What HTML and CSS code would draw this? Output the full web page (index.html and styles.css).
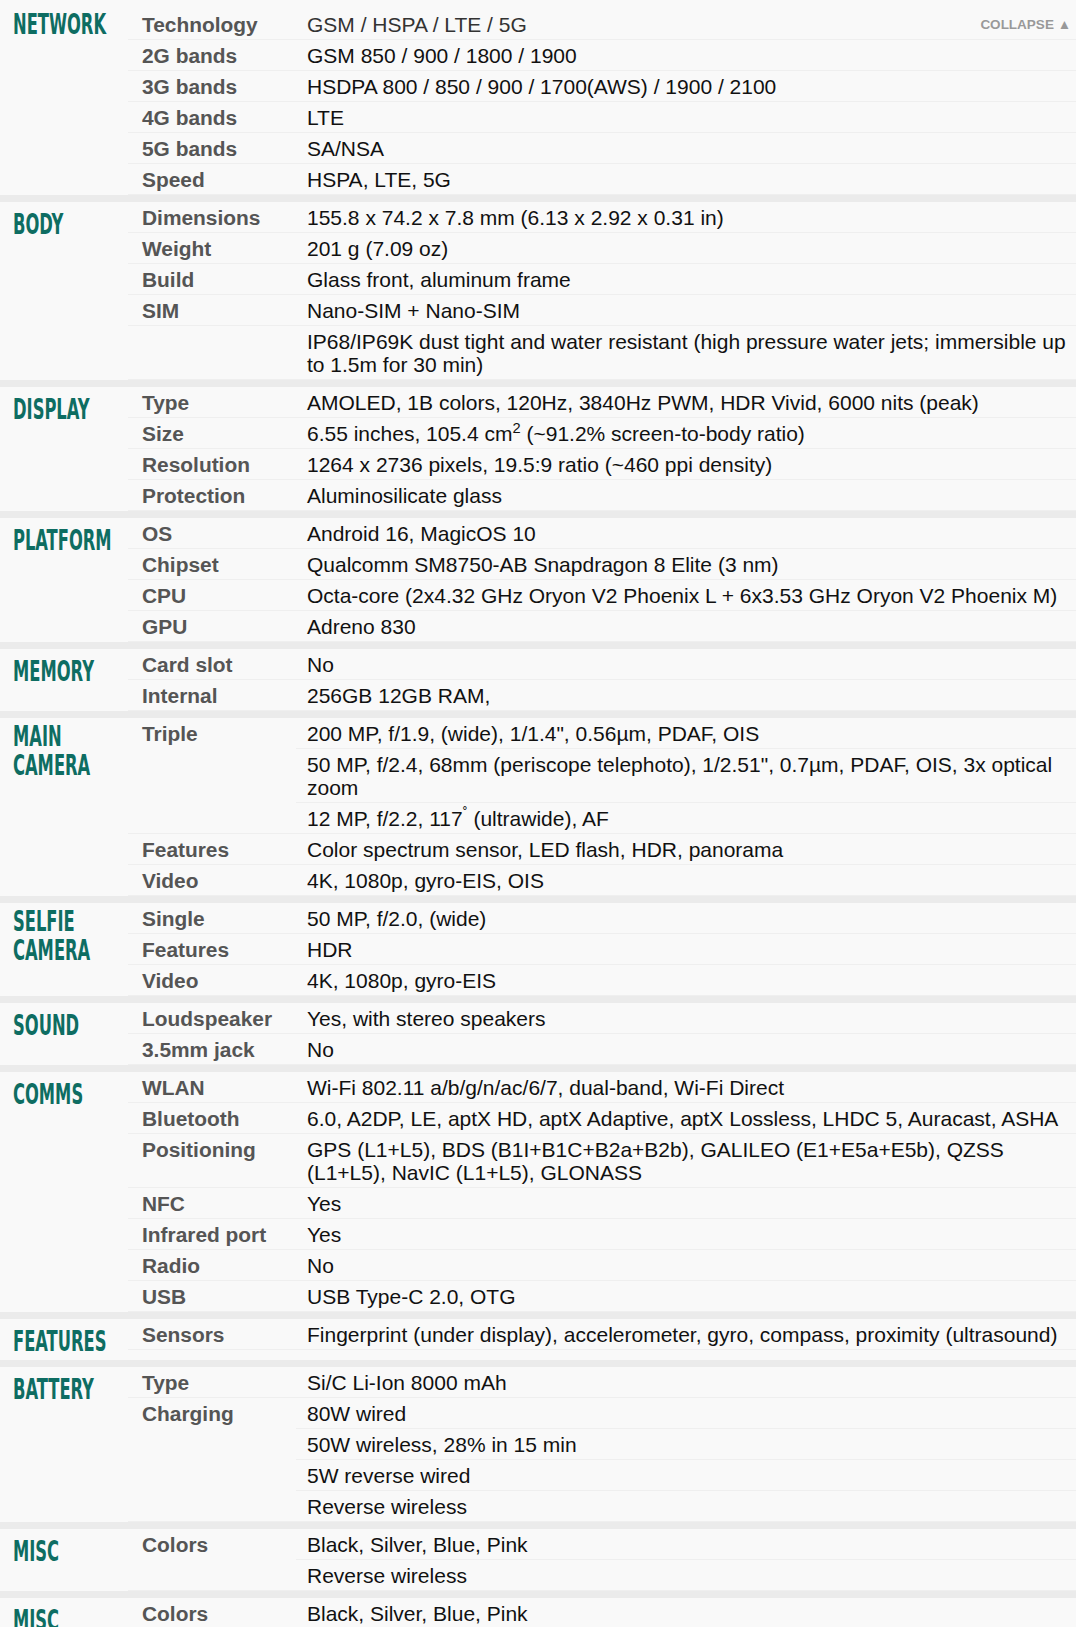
FILE: index.html
```html
<!DOCTYPE html>
<html lang="en">
<head>
<meta charset="utf-8">
<title>Specs</title>
<link rel="stylesheet" href="styles.css">
</head>
<body>
<div class="specs">

  <section class="cat cat-first">
    <h2 class="cat-title"><span>NETWORK</span></h2>
    <div class="specs-list">
      <div class="spec"><div class="label">Technology</div><div class="vals"><div class="val val-link">GSM / HSPA / LTE / 5G</div></div></div>
      <div class="spec"><div class="label">2G bands</div><div class="vals"><div class="val">GSM 850 / 900 / 1800 / 1900</div></div></div>
      <div class="spec"><div class="label">3G bands</div><div class="vals"><div class="val">HSDPA 800 / 850 / 900 / 1700(AWS) / 1900 / 2100</div></div></div>
      <div class="spec"><div class="label">4G bands</div><div class="vals"><div class="val">LTE</div></div></div>
      <div class="spec"><div class="label">5G bands</div><div class="vals"><div class="val">SA/NSA</div></div></div>
      <div class="spec"><div class="label">Speed</div><div class="vals"><div class="val">HSPA, LTE, 5G</div></div></div>
    </div>
    <a class="collapse">COLLAPSE &#9650;</a>
  </section>

  <section class="cat">
    <h2 class="cat-title"><span>BODY</span></h2>
    <div class="specs-list">
      <div class="spec"><div class="label">Dimensions</div><div class="vals"><div class="val">155.8 x 74.2 x 7.8 mm (6.13 x 2.92 x 0.31 in)</div></div></div>
      <div class="spec"><div class="label">Weight</div><div class="vals"><div class="val">201 g (7.09 oz)</div></div></div>
      <div class="spec"><div class="label">Build</div><div class="vals"><div class="val">Glass front, aluminum frame</div></div></div>
      <div class="spec"><div class="label">SIM</div><div class="vals"><div class="val">Nano-SIM + Nano-SIM</div></div></div>
      <div class="spec"><div class="label"></div><div class="vals"><div class="val">IP68/IP69K dust tight and water resistant (high pressure water jets; immersible up to 1.5m for 30 min)</div></div></div>
    </div>
  </section>

  <section class="cat">
    <h2 class="cat-title"><span>DISPLAY</span></h2>
    <div class="specs-list">
      <div class="spec"><div class="label">Type</div><div class="vals"><div class="val">AMOLED, 1B colors, 120Hz, 3840Hz PWM, HDR Vivid, 6000 nits (peak)</div></div></div>
      <div class="spec"><div class="label">Size</div><div class="vals"><div class="val">6.55 inches, 105.4 cm<sup>2</sup> (~91.2% screen-to-body ratio)</div></div></div>
      <div class="spec"><div class="label">Resolution</div><div class="vals"><div class="val">1264 x 2736 pixels, 19.5:9 ratio (~460 ppi density)</div></div></div>
      <div class="spec"><div class="label">Protection</div><div class="vals"><div class="val">Aluminosilicate glass</div></div></div>
    </div>
  </section>

  <section class="cat">
    <h2 class="cat-title"><span>PLATFORM</span></h2>
    <div class="specs-list">
      <div class="spec"><div class="label">OS</div><div class="vals"><div class="val">Android 16, MagicOS 10</div></div></div>
      <div class="spec"><div class="label">Chipset</div><div class="vals"><div class="val">Qualcomm SM8750-AB Snapdragon 8 Elite (3 nm)</div></div></div>
      <div class="spec"><div class="label">CPU</div><div class="vals"><div class="val">Octa-core (2x4.32 GHz Oryon V2 Phoenix L + 6x3.53 GHz Oryon V2 Phoenix M)</div></div></div>
      <div class="spec"><div class="label">GPU</div><div class="vals"><div class="val">Adreno 830</div></div></div>
    </div>
  </section>

  <section class="cat">
    <h2 class="cat-title"><span>MEMORY</span></h2>
    <div class="specs-list">
      <div class="spec"><div class="label">Card slot</div><div class="vals"><div class="val">No</div></div></div>
      <div class="spec"><div class="label">Internal</div><div class="vals"><div class="val">256GB 12GB RAM,</div></div></div>
    </div>
  </section>

  <section class="cat">
    <h2 class="cat-title cat-title-two"><span>MAIN<br>CAMERA</span></h2>
    <div class="specs-list">
      <div class="spec"><div class="label">Triple</div><div class="vals">
        <div class="val">200 MP, f/1.9, (wide), 1/1.4", 0.56µm, PDAF, OIS</div>
        <div class="val">50 MP, f/2.4, 68mm (periscope telephoto), 1/2.51", 0.7µm, PDAF, OIS, 3x optical zoom</div>
        <div class="val">12 MP, f/2.2, 117<sup>˚</sup> (ultrawide), AF</div>
      </div></div>
      <div class="spec"><div class="label">Features</div><div class="vals"><div class="val">Color spectrum sensor, LED flash, HDR, panorama</div></div></div>
      <div class="spec"><div class="label">Video</div><div class="vals"><div class="val">4K, 1080p, gyro-EIS, OIS</div></div></div>
    </div>
  </section>

  <section class="cat">
    <h2 class="cat-title cat-title-two"><span>SELFIE<br>CAMERA</span></h2>
    <div class="specs-list">
      <div class="spec"><div class="label">Single</div><div class="vals"><div class="val">50 MP, f/2.0, (wide)</div></div></div>
      <div class="spec"><div class="label">Features</div><div class="vals"><div class="val">HDR</div></div></div>
      <div class="spec"><div class="label">Video</div><div class="vals"><div class="val">4K, 1080p, gyro-EIS</div></div></div>
    </div>
  </section>

  <section class="cat">
    <h2 class="cat-title"><span>SOUND</span></h2>
    <div class="specs-list">
      <div class="spec"><div class="label">Loudspeaker</div><div class="vals"><div class="val">Yes, with stereo speakers</div></div></div>
      <div class="spec"><div class="label">3.5mm jack</div><div class="vals"><div class="val">No</div></div></div>
    </div>
  </section>

  <section class="cat">
    <h2 class="cat-title"><span>COMMS</span></h2>
    <div class="specs-list">
      <div class="spec"><div class="label">WLAN</div><div class="vals"><div class="val">Wi-Fi 802.11 a/b/g/n/ac/6/7, dual-band, Wi-Fi Direct</div></div></div>
      <div class="spec"><div class="label">Bluetooth</div><div class="vals"><div class="val">6.0, A2DP, LE, aptX HD, aptX Adaptive, aptX Lossless, LHDC 5, Auracast, ASHA</div></div></div>
      <div class="spec"><div class="label">Positioning</div><div class="vals"><div class="val">GPS (L1+L5), BDS (B1I+B1C+B2a+B2b), GALILEO (E1+E5a+E5b), QZSS (L1+L5), NavIC (L1+L5), GLONASS</div></div></div>
      <div class="spec"><div class="label">NFC</div><div class="vals"><div class="val">Yes</div></div></div>
      <div class="spec"><div class="label">Infrared port</div><div class="vals"><div class="val">Yes</div></div></div>
      <div class="spec"><div class="label">Radio</div><div class="vals"><div class="val">No</div></div></div>
      <div class="spec"><div class="label">USB</div><div class="vals"><div class="val">USB Type-C 2.0, OTG</div></div></div>
    </div>
  </section>

  <section class="cat">
    <h2 class="cat-title cat-title-tall"><span>FEATURES</span></h2>
    <div class="specs-list">
      <div class="spec"><div class="label">Sensors</div><div class="vals"><div class="val">Fingerprint (under display), accelerometer, gyro, compass, proximity (ultrasound)</div></div></div>
    </div>
  </section>

  <section class="cat">
    <h2 class="cat-title"><span>BATTERY</span></h2>
    <div class="specs-list">
      <div class="spec"><div class="label">Type</div><div class="vals"><div class="val">Si/C Li-Ion 8000 mAh</div></div></div>
      <div class="spec"><div class="label">Charging</div><div class="vals">
        <div class="val">80W wired</div>
        <div class="val">50W wireless, 28% in 15 min</div>
        <div class="val">5W reverse wired</div>
        <div class="val">Reverse wireless</div>
      </div></div>
    </div>
  </section>

  <section class="cat">
    <h2 class="cat-title"><span>MISC</span></h2>
    <div class="specs-list">
      <div class="spec"><div class="label">Colors</div><div class="vals">
        <div class="val">Black, Silver, Blue, Pink</div>
        <div class="val">Reverse wireless</div>
      </div></div>
    </div>
  </section>

  <section class="cat">
    <h2 class="cat-title"><span>MISC</span></h2>
    <div class="specs-list">
      <div class="spec"><div class="label">Colors</div><div class="vals"><div class="val">Black, Silver, Blue, Pink</div></div></div>
    </div>
  </section>

</div>
</body>
</html>
```

FILE: styles.css
```css
html, body {
  margin: 0;
  padding: 0;
  background: #f9f9f9;
}

body {
  font-family: "Liberation Sans", Arial, sans-serif;
  color: #111;
}

.specs {
  width: 100%;
}

.cat {
  display: flex;
  border-top: 7px solid #ebebeb;
}

.cat-first {
  position: relative;
  border-top: 0;
}

.cat-title {
  flex: none;
  width: 128px;
  box-sizing: border-box;
  margin: 0;
  padding: 8px 0 2px 13px;
  font-family: "DejaVu Sans Condensed", "DejaVu Sans", sans-serif;
  font-stretch: condensed;
  font-weight: bold;
  font-size: 29px;
  line-height: 29px;
  color: #0e6d62;
  white-space: nowrap;
}

.cat-title span {
  display: block;
  transform: scaleX(0.626);
  transform-origin: 0 0;
}

.cat-title-two {
  padding-top: 4px;
}

.cat-title-tall {
  padding-bottom: 4px;
}

.cat-first .cat-title {
  padding-top: 10px;
}

.specs-list {
  flex: 1;
  min-width: 0;
}

.cat-first .specs-list {
  padding-top: 9px;
}

.spec {
  display: flex;
  border-bottom: 1px solid #efefef;
}

.label {
  flex: none;
  width: 168px;
  box-sizing: border-box;
  padding: 4px 0 3px 14px;
  font-weight: bold;
  font-size: 20.9px;
  line-height: 23px;
  color: #555;
}

.vals {
  flex: 1;
  min-width: 0;
}

.val {
  padding: 4px 5px 3px 11px;
  font-size: 21px;
  line-height: 23px;
  color: #111;
  border-bottom: 1px solid #efefef;
}

.val:last-child {
  border-bottom: 0;
}

.val-link {
  color: #333;
}

.val sup {
  font-size: 0.7em;
  line-height: 0;
  vertical-align: 0.55em;
}

.collapse {
  position: absolute;
  top: 17px;
  right: 5px;
  font-size: 13.5px;
  font-weight: bold;
  line-height: 16px;
  color: #999;
}
```
